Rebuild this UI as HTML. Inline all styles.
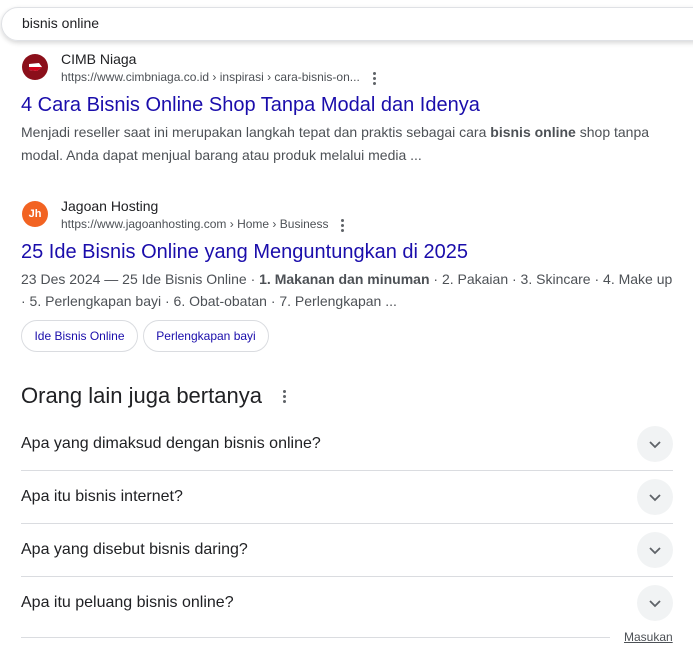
<!DOCTYPE html>
<html><head><meta charset="utf-8"><style>
body{margin:0;width:693px;height:653px;overflow:hidden;background:#fff;font-family:"Liberation Sans",Arial,sans-serif;position:relative;color:#202124}
.a{position:absolute;white-space:nowrap}
.search{position:absolute;left:1px;top:7px;width:720px;height:32px;border:1px solid #dfe1e5;border-radius:20px;box-shadow:0 2px 5px rgba(32,33,36,.18)}
.fav{position:absolute;width:26px;height:26px;border-radius:50%}
.site{font-size:14px;color:#202124}
.url{font-size:12px;color:#4d5156}
.title{font-size:20px;color:#1a0dab}
.snip{font-size:14px;color:#4d5156}
.dots{position:absolute;width:3px}
.dots i{display:block;width:3px;height:3px;border-radius:50%;background:#5f6368;margin-bottom:2px}
.chip{position:absolute;top:320px;height:30px;border:1px solid #dadce0;border-radius:16px;font-size:12px;color:#1a0dab;line-height:30px;text-align:center}
.q{font-size:16px;color:#202124}
.hr{position:absolute;left:21px;width:652px;height:1px;background:#dadce0}
.chev{position:absolute;left:637px;width:36px;height:36px;border-radius:50%;background:#f1f3f4}
</style></head><body>
<div class="search"></div>
<div class="a" style="left:22px;top:15px;font-size:14px;color:#202124">bisnis online</div>

<div class="fav" style="left:22px;top:54px;background:#8b0f1a"><svg width="26" height="26"><path d="M7 10 L17 9 L20 13 L15 17 L7 16 Z" fill="#fff"/><path d="M7 13 L20 13 L15 17 L7 16Z" fill="#d0021b"/></svg></div>
<div class="a site" style="left:61px;top:51px">CIMB Niaga</div>
<div class="a url" style="left:61px;top:70px">https://www.cimbniaga.co.id › inspirasi › cara-bisnis-on...</div>
<div class="dots" style="left:373px;top:72px"><i></i><i></i><i></i></div>
<div class="a title" style="left:21px;top:94px">4 Cara Bisnis Online Shop Tanpa Modal dan Idenya</div>
<div class="a snip" style="left:21px;top:124px">Menjadi reseller saat ini merupakan langkah tepat dan praktis sebagai cara <b>bisnis online</b> shop tanpa</div>
<div class="a snip" style="left:21px;top:147px">modal. Anda dapat menjual barang atau produk melalui media ...</div>

<div class="fav" style="left:22px;top:201px;background:#f26322;color:#fff;font-size:11px;font-weight:bold;text-align:center;line-height:26px">Jh</div>
<div class="a site" style="left:61px;top:198px">Jagoan Hosting</div>
<div class="a url" style="left:61px;top:217px">https://www.jagoanhosting.com › Home › Business</div>
<div class="dots" style="left:341px;top:219px"><i></i><i></i><i></i></div>
<div class="a title" style="left:21px;top:241px">25 Ide Bisnis Online yang Menguntungkan di 2025</div>
<div class="a snip" style="left:21px;top:271px">23 Des 2024 — 25 Ide Bisnis Online · <b>1. Makanan dan minuman</b> · 2. Pakaian · 3. Skincare · 4. Make up</div>
<div class="a snip" style="left:21px;top:293px">· 5. Perlengkapan bayi · 6. Obat-obatan · 7. Perlengkapan ...</div>
<div class="chip" style="left:21px;width:115px">Ide Bisnis Online</div>
<div class="chip" style="left:143px;width:124px">Perlengkapan bayi</div>

<div class="a" style="left:21px;top:383px;font-size:22px;color:#202124">Orang lain juga bertanya</div>
<div class="dots" style="left:283px;top:390px"><i></i><i></i><i></i></div>

<div class="a q" style="left:21px;top:435px">Apa yang dimaksud dengan bisnis online?</div>
<div class="a q" style="left:21px;top:488px">Apa itu bisnis internet?</div>
<div class="a q" style="left:21px;top:541px">Apa yang disebut bisnis daring?</div>
<div class="a q" style="left:21px;top:594px">Apa itu peluang bisnis online?</div>
<div class="hr" style="top:470px"></div>
<div class="hr" style="top:523px"></div>
<div class="hr" style="top:576px"></div>
<div class="hr" style="top:637px;width:589px"></div>
<div class="chev" style="top:426px"><svg width="36" height="36"><path d="M13 16 L18 21 L23 16" stroke="#5f6368" stroke-width="1.8" fill="none"/></svg></div>
<div class="chev" style="top:479px"><svg width="36" height="36"><path d="M13 16 L18 21 L23 16" stroke="#5f6368" stroke-width="1.8" fill="none"/></svg></div>
<div class="chev" style="top:532px"><svg width="36" height="36"><path d="M13 16 L18 21 L23 16" stroke="#5f6368" stroke-width="1.8" fill="none"/></svg></div>
<div class="chev" style="top:585px"><svg width="36" height="36"><path d="M13 16 L18 21 L23 16" stroke="#5f6368" stroke-width="1.8" fill="none"/></svg></div>
<div class="a" style="left:624px;top:630px;font-size:12px;color:#4d5156;text-decoration:underline">Masukan</div>
</body></html>
